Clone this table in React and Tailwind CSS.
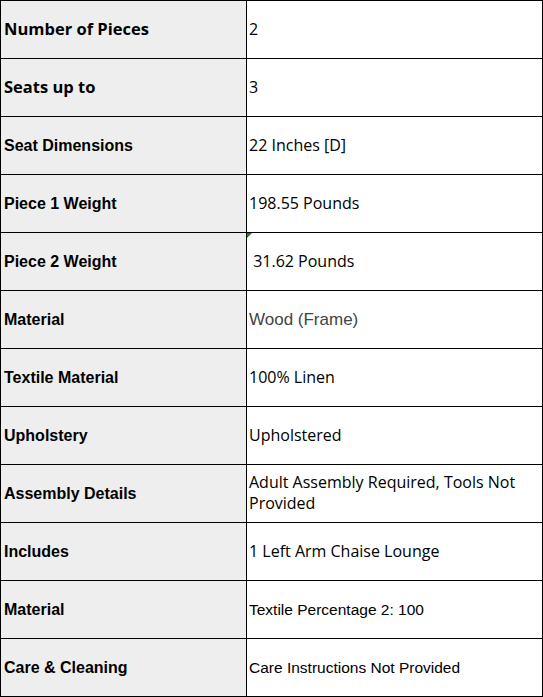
import React from "react";

const SEGOE = "font-['Open_Sans','Noto_Sans',sans-serif] text-[16.5px]";
const ARIAL = "font-['Liberation_Sans',Arial,sans-serif] text-[16px]";

const rows = [
  { label: "Number of Pieces", lf: SEGOE, value: "2", vf: "seg" },
  { label: "Seats up to", lf: SEGOE, value: "3", vf: "seg" },
  { label: "Seat Dimensions", lf: ARIAL, value: "22 Inches [D]", vf: "seg" },
  { label: "Piece 1 Weight", lf: ARIAL, value: "198.55 Pounds", vf: "seg" },
  { label: "Piece 2 Weight", lf: ARIAL, value: "\u00a031.62 Pounds", vf: "seg", flag: true },
  { label: "Material", lf: ARIAL, value: "Wood (Frame)", vf: "gray" },
  { label: "Textile Material", lf: ARIAL, value: "100% Linen", vf: "seg" },
  { label: "Upholstery", lf: ARIAL, value: "Upholstered", vf: "seg" },
  { label: "Assembly Details", lf: ARIAL, value: "Adult Assembly Required, Tools Not Provided", vf: "seg" },
  { label: "Includes", lf: ARIAL, value: "1 Left Arm Chaise Lounge", vf: "seg" },
  { label: "Material", lf: ARIAL, value: "Textile Percentage 2: 100", vf: "arial" },
  { label: "Care & Cleaning", lf: ARIAL, value: "Care Instructions Not Provided", vf: "arial" },
];

function valueClass(vf) {
  if (vf === "gray") return "font-['Liberation_Sans',Arial,sans-serif] text-[17px] text-[#444444]";
  if (vf === "arial") return "font-['Liberation_Sans',Arial,sans-serif] text-[15.5px] text-black";
  return "font-['Open_Sans','Noto_Sans',sans-serif] text-[16px] text-black";
}

export default function App() {
  return (
    <div className="w-[543px] bg-white">
      <div className="grid grid-cols-[246px_296px] border-l border-t border-black">
        {rows.map((r, i) => (
          <React.Fragment key={i}>
            <div
              className={`h-[58px] flex items-center border-r border-b border-black bg-[#eeeeee] pl-[3px] font-bold text-black ${r.lf}`}
            >
              {r.label}
            </div>
            <div
              className={`relative h-[58px] flex items-center border-r border-b border-black bg-white pl-[2px] pr-[4px] pb-[1px] leading-[21px] ${valueClass(r.vf)}`}
            >
              {r.flag && (
                <svg className="absolute left-0 top-0" width="5" height="5" viewBox="0 0 5 5">
                  <polygon points="0,0 5,0 0,5" fill="#1e7a1e" />
                </svg>
              )}
              <span className="whitespace-pre-wrap">{r.value}</span>
            </div>
          </React.Fragment>
        ))}
      </div>
    </div>
  );
}
